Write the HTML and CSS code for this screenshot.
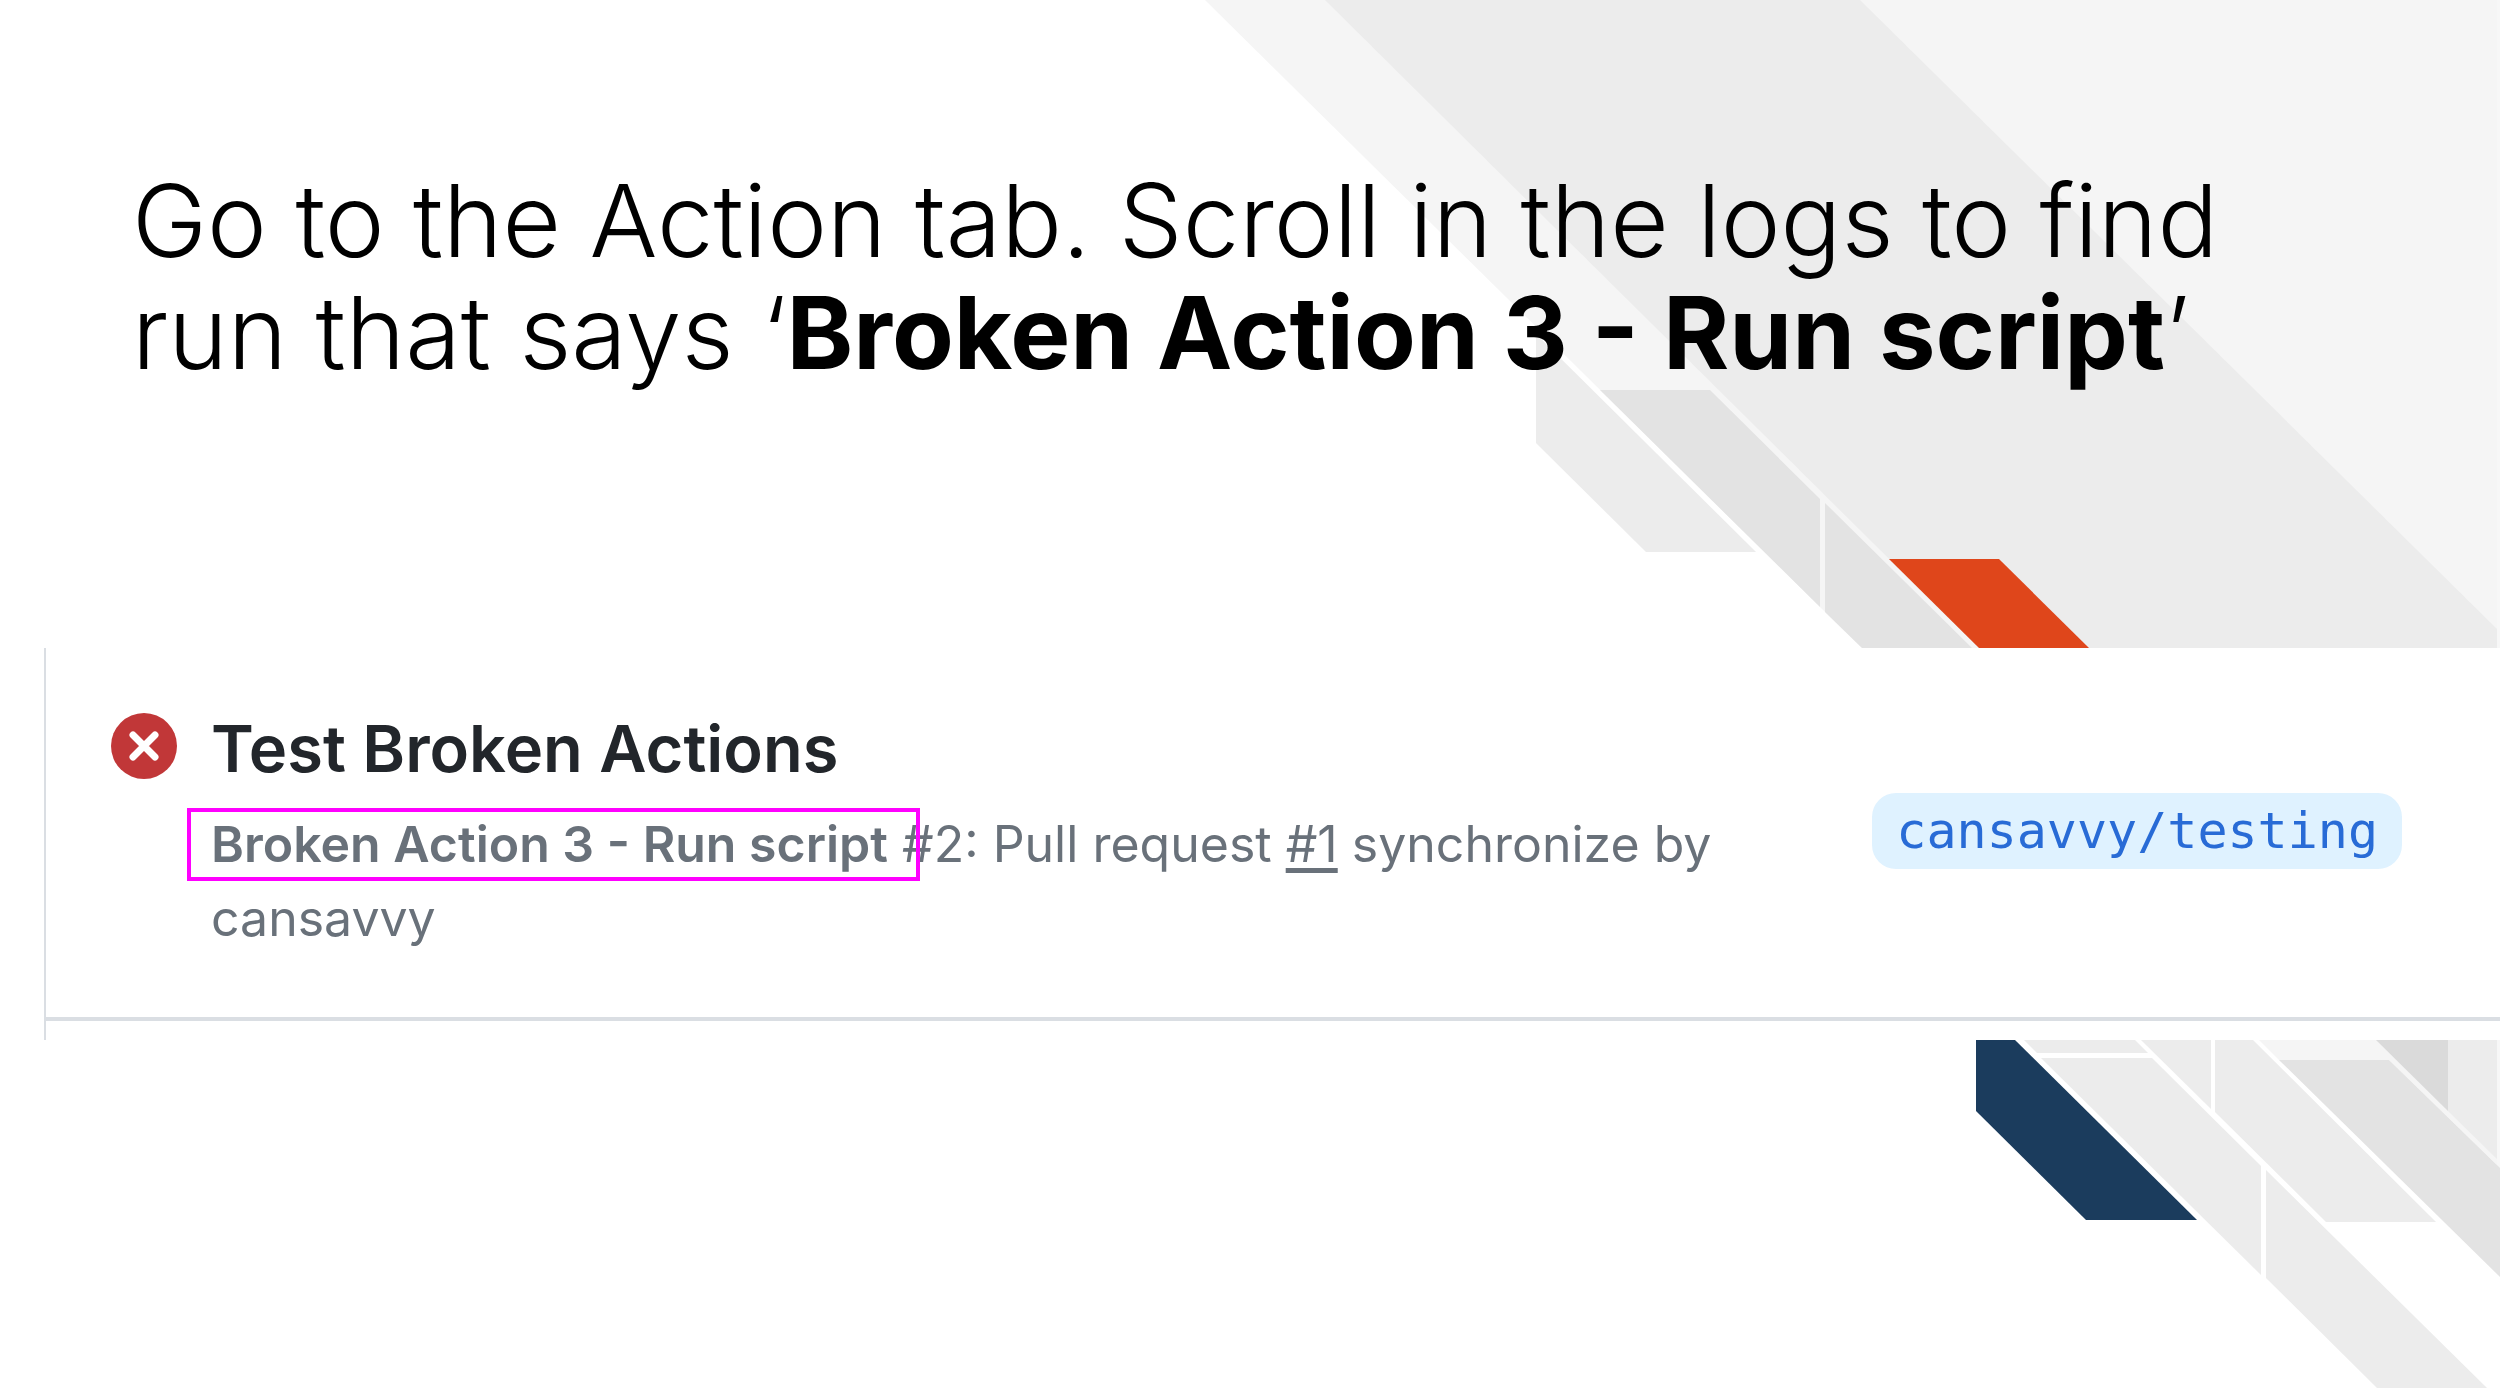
FILE: index.html
```
<!DOCTYPE html>
<html lang="en">

<head>
    <meta charset="UTF-8">
    <meta name="viewport" content="width=device-width, initial-scale=1.0">
    <title>Find the broken run</title>

    <link rel="stylesheet" href="styles.css">
</head>

<body>

    <main class="slide">
        <svg class="slide__shapes" viewBox="0 0 2500 1388" preserveAspectRatio="xMaxYMin slice" aria-hidden="true">
            <!-- top bands -->
            <g class="shade-1">
                <polygon points="1205,0 2497,0 2497,648 1862,648 1820,607" />
            </g>
            <g class="shade-2">
                <polygon points="1325,0 1860,0 2497,629 2497,648 1979,648" />
                <polygon points="1536,334 1756,552 1646,552 1536,443" />
            </g>
            <g class="shade-3">
                <polygon points="1600,390 1710,390 1820,499 1820,607" />
                <polygon points="1825,503 1972,648 1862,648 1825,612" />
            </g>
            <polygon class="orange" points="1889,559 1999,559 2089,648 1979,648" />

            <!-- bottom bands -->
            <g class="shade-1">
                <polygon points="2258,1039 2497,1039 2497,1165 2389,1060 2279,1060" />
            </g>
            <g class="shade-2">
                <polygon points="2023,1039 2134,1039 2148,1053 2037,1053" />
                <polygon points="2041,1058 2152,1058 2261,1166 2261,1275" />
                <polygon points="2140,1039 2211,1039 2211,1109" />
                <polygon points="2215,1039 2252,1039 2436,1222 2326,1222 2215,1112" />
                <polygon points="2266,1170 2487,1388 2377,1388 2266,1278" />
                <polygon points="2448,1039 2497,1039 2497,1159 2448,1111" />
            </g>

            <!-- thin light edge on the right -->
            <rect class="edge" x="2497" y="0" width="3" height="1168" />

            <polygon class="shade-3" points="2279,1060 2389,1060 2500,1168 2500,1277" />
            <polygon class="shade-4" points="2375,1039 2448,1039 2448,1111" />
            <polygon class="navy" points="1976,1039 2014,1039 2197,1220 2086,1220 1976,1111" />
        </svg>

        <h1 class="slide__title">Go to the Action tab. Scroll in the logs to find <br>run that says ‘<strong>Broken Action 3 - Run script</strong>’</h1>

        <section class="log">
            <article class="run">
                <svg class="run__status" viewBox="0 0 66 66" role="img" aria-label="Failed">
                    <circle cx="33" cy="33" r="33" />
                    <path d="M22 22l22 22M44 22l-22 22" />
                </svg>
                <div class="run__info">
                    <h2 class="run__name">Test Broken Actions</h2>
                    <p class="run__text"><strong class="run__commit">Broken Action 3 - Run script</strong> #2: Pull request <a href="#">#1</a> synchronize by cansavvy</p>
                </div>
                <a class="run__branch" href="#">cansavvy/testing</a>
            </article>
        </section>
    </main>

</body>

</html>
```
FILE: styles.css
```
* {
    box-sizing: border-box;
}

body {
    margin: 0;
    background: #fff;
    font-family: Inter, "Liberation Sans", sans-serif;
}

.slide {
    position: relative;
    min-height: 100vh;
    overflow: hidden;
}

/* decorative bands behind everything */

.slide__shapes {
    position: absolute;
    top: 0;
    left: 0;
    width: 100%;
    height: 100%;
}

.shade-1 {
    fill: #f5f5f5;
}

.shade-2 {
    fill: #ececec;
}

.shade-3 {
    fill: #e3e3e3;
}

.shade-4 {
    fill: #dadada;
}

.edge {
    fill: #f7f7f7;
}

.orange {
    fill: #df461b;
}

.navy {
    fill: #1b3c5d;
}

.slide__title {
    position: relative;
    margin: 0;
    padding: 164px 132px 260px;
    font-size: 101px;
    line-height: 112px;
    font-weight: 300;
    color: #000;
    white-space: nowrap;
}

.slide__title strong {
    font-weight: 700;
}

.log {
    position: relative;
    margin-left: 44px;
    padding-bottom: 19px;
    border-left: 2px solid #dadee3;
    background: #fff;
}

.run {
    display: flex;
    align-items: flex-start;
    padding: 65px 98px 62px 65px;
    border-bottom: 4px solid #dadee3;
}

.run__status {
    flex: none;
    width: 66px;
    height: 66px;
    margin-right: 34px;
}

.run__status circle {
    fill: #c13738;
}

.run__status path {
    fill: none;
    stroke: #fff;
    stroke-width: 7;
    stroke-linecap: round;
}

.run__info {
    flex: 1;
    padding-right: 100px;
}

.run__name {
    margin: 0;
    font-size: 65px;
    line-height: 72px;
    font-weight: 600;
    color: #22262b;
}

.run__text {
    margin: 22px 0 0;
    font-size: 50px;
    line-height: 74px;
    color: #69717a;
}

.run__text a {
    color: inherit;
    text-underline-offset: 6px;
}

.run__commit {
    position: relative;
    font-weight: 600;
}

/* marker frame around the commit name */

.run__commit::after {
    content: "";
    position: absolute;
    top: -6px;
    bottom: -7px;
    left: -24px;
    right: -32px;
    border: 4px solid #f0f;
}

.run__branch {
    flex: none;
    margin-top: 80px;
    padding: 0 24px;
    border-radius: 24px;
    background: #dff2ff;
    font-family: "DejaVu Sans Mono", monospace;
    font-size: 50px;
    line-height: 76px;
    color: #286bd6;
    text-decoration: none;
}
```
